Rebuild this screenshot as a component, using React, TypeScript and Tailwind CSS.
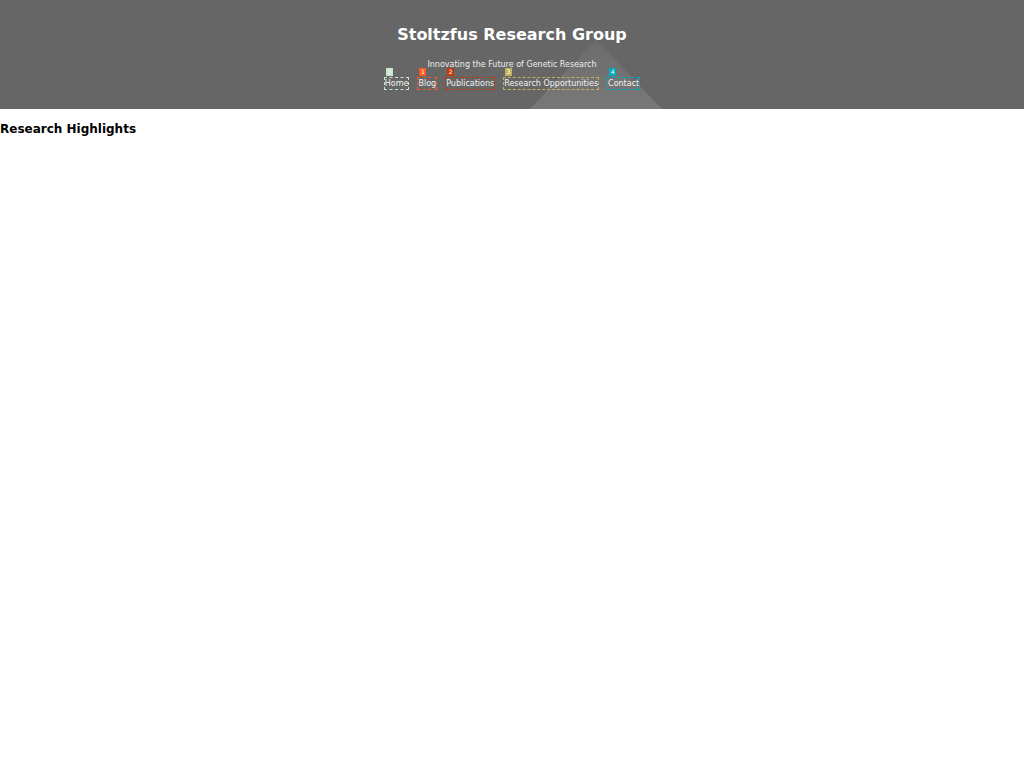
const links = [
  { label: "Home", n: 0, color: "border-[#c8e6c9]", badge: "bg-[#c8e6c9] text-[#e8f5e9]" },
  { label: "Blog", n: 1, color: "border-[#ff5722]", badge: "bg-[#ff5722] text-white" },
  { label: "Publications", n: 2, color: "border-[#c1390e]", badge: "bg-[#c1390e] text-white" },
  { label: "Research Opportunities", n: 3, color: "border-[#c0b25a]", badge: "bg-[#c0b25a] text-white" },
  { label: "Contact", n: 4, color: "border-[#00acc1]", badge: "bg-[#00acc1] text-white" },
];

export default function App() {
  return (
    <div className="min-h-[768px] bg-white font-['DejaVu_Sans',sans-serif]">
      <header className="relative h-[109px] overflow-hidden bg-[#666666] text-center text-white">
        {/* background triangle */}
        <svg
          className="pointer-events-none absolute left-[530px] top-[40px]"
          width="132"
          height="69"
          viewBox="0 0 132 69"
        >
          <defs>
            <linearGradient id="tri" x1="0" y1="0" x2="0" y2="1">
              <stop offset="0" stopColor="#6c6c6c" />
              <stop offset="1" stopColor="#787878" />
            </linearGradient>
          </defs>
          <polygon points="66,0 132,69 0,69" fill="url(#tri)" />
        </svg>
        <div className="relative pt-[25px]">
          <h1 className="text-[16px] font-bold leading-[20px]">Stoltzfus Research Group</h1>
          <p className="mt-[15px] text-[8px] leading-[10px] text-[#eeeeee]">
            Innovating the Future of Genetic Research
          </p>
          <nav className="mt-[7px] flex justify-center gap-[8px]">
            {links.map((l) => (
              <a
                key={l.label}
                href="#"
                className={`relative inline-block border border-dashed text-[8px] leading-[11px] text-[#f2f2f2] ${l.color}`}
              >
                <span
                  className={`absolute left-[1px] top-[-10px] h-[8px] min-w-[7px] px-[1px] text-[6px] leading-[8px] ${l.badge}`}
                >
                  {l.n}
                </span>
                {l.label}
              </a>
            ))}
          </nav>
        </div>
      </header>
      <h2 className="mt-[13px] text-[12px] font-bold leading-[15px] text-black">Research Highlights</h2>
    </div>
  );
}
